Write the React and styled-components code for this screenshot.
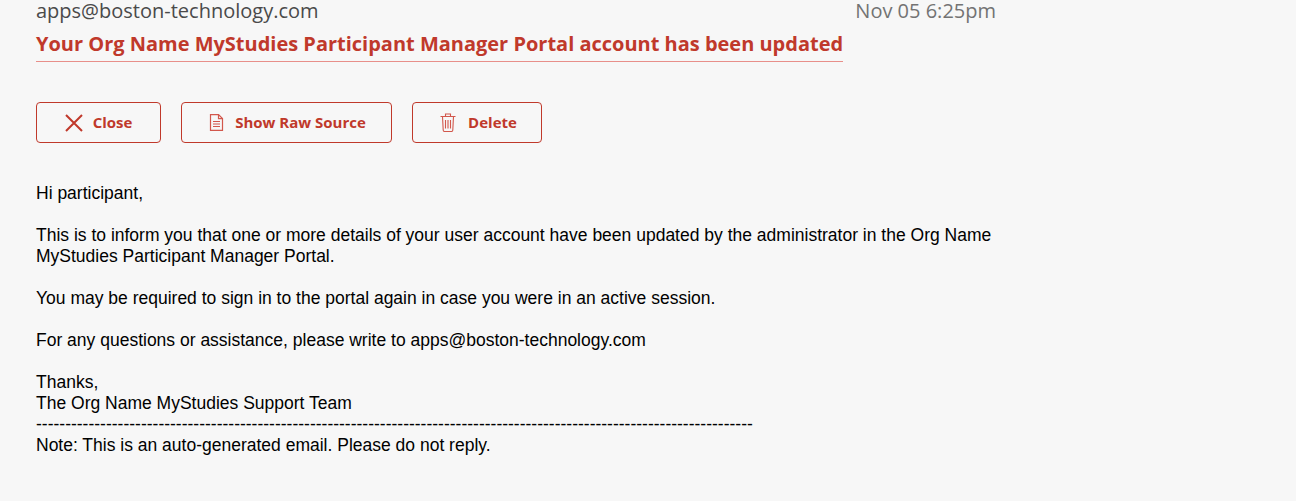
import React from "react";
import styled, { createGlobalStyle } from "styled-components";

const GlobalStyle = createGlobalStyle`
  html, body {
    margin: 0;
    padding: 0;
    background: #f7f7f7;
    overflow: hidden;
  }
`;

const Page = styled.div`
  width: 960px;
  height: 501px;
  padding-left: 36px;
  background: #f7f7f7;
  font-family: "Open Sans", sans-serif;
`;

const MetaRow = styled.div`
  display: flex;
  justify-content: space-between;
  align-items: center;
  height: 22px;
  font-size: 20px;
  line-height: 22px;
`;

const Sender = styled.span`
  color: #4a4a4a;
`;

const SentAt = styled.span`
  color: #737373;
`;

const Subject = styled.div`
  display: inline-block;
  margin-top: 8px;
  padding-bottom: 4px;
  font-size: 19.99px;
  line-height: 27px;
  font-weight: 700;
  color: #c0392b;
  border-bottom: 1px solid #e88f8a;
`;

const Actions = styled.div`
  display: flex;
  gap: 20px;
  margin-top: 40px;
`;

const ActionButton = styled.button`
  display: flex;
  align-items: center;
  justify-content: center;
  gap: ${(props) => props.$gap}px;
  width: ${(props) => props.$width}px;
  height: 41px;
  padding: 0 0 0 ${(props) => props.$shift || 0}px;
  background: transparent;
  border: 1px solid #c0392b;
  border-radius: 4px;
  font-family: "Open Sans", sans-serif;
  font-size: 15px;
  font-weight: 700;
  color: #c0392b;
`;

const ButtonLabel = styled.span`
  margin-bottom: 2px;
`;

const Body = styled.div`
  margin-top: 40px;
  font-family: "Liberation Sans", Arial, sans-serif;
  font-size: 17.5px;
  line-height: 21px;
  color: #000;
`;

const Paragraph = styled.p`
  margin: 0 0 21px;
`;

const Signoff = styled.p`
  margin: 0;
`;

const CloseIcon = () => (
  <svg width="18" height="18" viewBox="0 0 18 18" fill="none" stroke="#c0392b" strokeWidth="2">
    <path d="M1 1l16 16M17 1L1 17" />
  </svg>
);

const DocIcon = () => (
  <svg width="15" height="17" viewBox="0 0 15 17" fill="none" stroke="#d2574c" strokeWidth="1.2">
    <path d="M1.5.6h8l4 4v11.8h-12z" />
    <path d="M9.5.6v4h4" />
    <path d="M4 7.5h7M4 10h7M4 12.5h7" />
  </svg>
);

const TrashIcon = () => (
  <svg width="16" height="19" viewBox="0 0 16 19" fill="none" stroke="#d2574c" strokeWidth="1.1">
    <path d="M.5 3.5h15M5.5 3.5v-2.5h5v2.5" />
    <path d="M2.5 3.5l.7 13.5c0 .8.5 1.5 1.3 1.5h7c.8 0 1.3-.7 1.3-1.5l.7-13.5" />
    <path d="M5.5 7v8.5M8 7v8.5M10.5 7v8.5" />
  </svg>
);

const App = () => {
  return (
    <Page>
      <GlobalStyle />
      <MetaRow>
        <Sender>apps@boston-technology.com</Sender>
        <SentAt>Nov 05 6:25pm</SentAt>
      </MetaRow>
      <Subject>Your Org Name MyStudies Participant Manager Portal account has been updated</Subject>
      <Actions>
        <ActionButton $width={125} $gap={10}>
          <CloseIcon />
          <ButtonLabel>Close</ButtonLabel>
        </ActionButton>
        <ActionButton $width={211} $gap={11} $shift={2}>
          <DocIcon />
          <ButtonLabel>Show Raw Source</ButtonLabel>
        </ActionButton>
        <ActionButton $width={130} $gap={12} $shift={3}>
          <TrashIcon />
          <ButtonLabel>Delete</ButtonLabel>
        </ActionButton>
      </Actions>
      <Body>
        <Paragraph>Hi participant,</Paragraph>
        <Paragraph>
          This is to inform you that one or more details of your user account have been updated by the
          administrator in the Org Name MyStudies Participant Manager Portal.
        </Paragraph>
        <Paragraph>You may be required to sign in to the portal again in case you were in an active session.</Paragraph>
        <Paragraph>For any questions or assistance, please write to apps@boston-technology.com</Paragraph>
        <Signoff>
          Thanks,
          <br />
          The Org Name MyStudies Support Team
          <br />
          ---------------------------------------------------------------------------------------------------------------------------
          <br />
          Note: This is an auto-generated email. Please do not reply.
        </Signoff>
      </Body>
    </Page>
  );
};

export default App;
